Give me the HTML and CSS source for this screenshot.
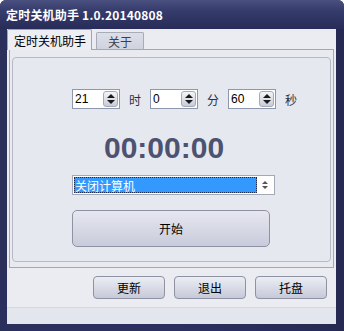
FILE: index.html
```html
<!DOCTYPE html>
<html>
<head>
<meta charset="utf-8">
<link rel="stylesheet" href="styles.css">
</head>
<body>
<div class="window">
  <div class="titlebar">定时关机助手 1.0.20140808</div>
  <div class="client">
    <div class="tabs">
      <div class="tab active">定时关机助手</div>
      <div class="tab">关于</div>
    </div>
    <div class="panel">
      <div class="group">
        <div class="spins">
          <div class="spin"><span class="val">21</span><span class="arrows"><i class="up"></i><i class="down"></i></span></div>
          <span class="unit">时</span>
          <div class="spin"><span class="val">0</span><span class="arrows"><i class="up"></i><i class="down"></i></span></div>
          <span class="unit">分</span>
          <div class="spin"><span class="val">60</span><span class="arrows"><i class="up"></i><i class="down"></i></span></div>
          <span class="unit">秒</span>
        </div>
        <div class="clock">00:00:00</div>
        <div class="select">
          <span class="sel-text">关闭计算机</span>
          <span class="sel-arrows"><i class="up small"></i><i class="down small"></i></span>
        </div>
        <div class="start">开始</div>
      </div>
    </div>
    <div class="buttons">
      <div class="btn">更新</div>
      <div class="btn">退出</div>
      <div class="btn">托盘</div>
    </div>
    <div class="strip"></div>
  </div>
</div>
</body>
</html>
```

FILE: styles.css
```css
* { box-sizing: border-box; }
html, body { margin: 0; padding: 0; background: #ffffff; }
body {
  font-family: "Noto Sans CJK SC", "Liberation Sans", sans-serif;
  font-size: 12px;
  color: #000;
}
.window {
  width: 344px;
  height: 331px;
  background: linear-gradient(90deg, #2a2f5c 0%, #2b3060 50%, #262a52 100%);
  border-radius: 6px 6px 0 0;
  display: flex;
  flex-direction: column;
  overflow: hidden;
}
.titlebar {
  height: 29px;
  padding-left: 6px;
  display: flex;
  align-items: center;
  color: #ffffff;
  font-weight: bold;
  font-size: 12px;
  background: linear-gradient(180deg, #4a5080 0%, #363c6c 35%, #272c58 100%);
  letter-spacing: 0.2px;
}
.client {
  flex: 1;
  margin: 0 8px 7px 7px;
  background: #eaecf1;
  display: flex;
  flex-direction: column;
}
.tabs {
  height: 20px;
  display: flex;
  align-items: flex-end;
  gap: 2px;
}
.tab {
  height: 17px;
  width: 48px;
  padding: 0 0 0 11px;
  border: 1px solid #a8acb8;
  border-bottom: none;
  border-radius: 2px 2px 0 0;
  background: linear-gradient(#dcdfe8, #cfd3de);
  color: #3a3f55;
  display: flex;
  align-items: center;
  margin-left: 2px;
}
.tab.active {
  width: 85px;
  margin-left: 0;
  padding: 0 0 0 6px;
  background: #eceef3;
  color: #000;
  border-color: #a0a4b0;
  position: relative;
  z-index: 1;
  margin-bottom: -1px;
  height: 21px;
}
.panel {
  height: 219px;
  margin: 0 2px 0 2px;
  border: 1px solid #a4a8b4;
  background: #e8eaf0;
  padding: 7px 2px 5px 2px;
}
.group {
  height: 205px;
  border: 1px solid #b6bac6;
  border-radius: 4px;
  background: #e6e8ef;
  display: flex;
  flex-direction: column;
  align-items: flex-start;
  padding-top: 31px;
  padding-left: 59px;
}
.spins {
  display: flex;
  align-items: center;
  height: 20px;
}
.spin {
  width: 48px;
  height: 20px;
  background: #ffffff;
  border: 1px solid #8e98ac;
  display: flex;
  align-items: center;
  justify-content: space-between;
  padding: 0 1px 0 2px;
}
.val { font-family: "Liberation Sans", sans-serif; font-size: 12px; }
.arrows {
  width: 15px;
  height: 16px;
  border-radius: 3px;
  background: linear-gradient(#f4f5f8, #c8ccd8);
  border: 1px solid #a6aab8;
  display: flex;
  flex-direction: column;
  align-items: center;
  justify-content: center;
  gap: 2px;
}
.up, .down {
  display: block;
  width: 0;
  height: 0;
  border-left: 4px solid transparent;
  border-right: 4px solid transparent;
}
.up { border-bottom: 4px solid #1a1a1a; }
.down { border-top: 4px solid #1a1a1a; }
.up.small { border-left-width: 3px; border-right-width: 3px; border-bottom: 3px solid #555; }
.down.small { border-left-width: 3px; border-right-width: 3px; border-top: 3px solid #555; }
.unit {
  width: 30px;
  text-align: center;
  color: #2c3044;
  font-size: 12px;
}
.clock {
  margin-top: 22px;
  margin-left: 32px;
  font-family: "Liberation Sans", sans-serif;
  font-weight: bold;
  font-size: 30px;
  line-height: 34px;
  color: #4c5270;
}
.select {
  margin-top: 10px;
  width: 203px;
  height: 20px;
  background: #ffffff;
  border: 1px solid #a4a8b8;
  display: flex;
  align-items: center;
  padding: 1px;
}
.sel-text {
  flex: 1;
  height: 16px;
  background: #3399ff;
  color: #ffffff;
  outline: 1px dotted #1a2a50;
  outline-offset: -1px;
  display: flex;
  align-items: center;
  padding-left: 1px;
  font-size: 12px;
}
.sel-arrows {
  width: 16px;
  display: flex;
  flex-direction: column;
  align-items: center;
  gap: 2px;
}
.start {
  margin-top: 15px;
  width: 198px;
  height: 37px;
  border: 1px solid #8e92a2;
  border-radius: 5px;
  background: linear-gradient(#e6e7ef, #c8cbdb);
  display: flex;
  align-items: center;
  justify-content: center;
  font-size: 12px;
}
.buttons {
  display: flex;
  justify-content: flex-end;
  gap: 9px;
  padding: 8px 9px 0 0;
  height: 39px;
}
.btn {
  width: 72px;
  height: 23px;
  border: 1px solid #8e92a2;
  border-radius: 4px;
  background: linear-gradient(#eceef4, #c6c9d8);
  display: flex;
  align-items: center;
  justify-content: center;
  font-size: 12px;
}
.strip {
  flex: 1;
  border-top: 1px solid #d4d8e2;
  background: #e4e6ee;
}
```
